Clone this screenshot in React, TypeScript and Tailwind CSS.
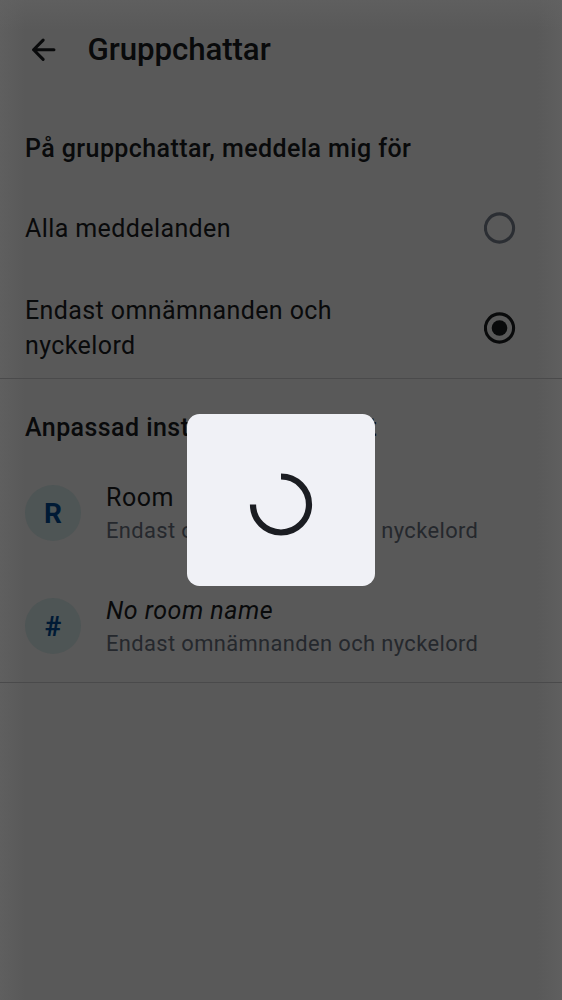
import React from 'react';

function SectionTitle({ children, className }: { children: React.ReactNode; className: string }) {
  return (
    <h2 className={`whitespace-nowrap pl-[25px] text-[25px] font-medium leading-[34px] text-[#090a0b] ${className}`}>
      {children}
    </h2>
  );
}

function Radio({ checked = false }: { checked?: boolean }) {
  const color = checked ? '#090a0b' : '#2b2e33';
  return (
    <svg width="32" height="32" viewBox="0 0 32 32" className="shrink-0" fill="none">
      <circle cx="15.5" cy="16" r="14.1" stroke={color} strokeWidth="3.1" />
      {checked && <circle cx="15.5" cy="16" r="7.8" fill={color} />}
    </svg>
  );
}

function Option({ label, checked }: { label: string; checked?: boolean }) {
  return (
    <div className="flex h-[100px] items-center justify-between pl-[25px] pr-[46px]">
      <span className={`w-[360px] text-[25px] leading-[34.4px] tracking-[0.4px] text-[#090a0b] ${checked ? 'pt-[1px]' : 'pt-[2px]'}`}>
        {label}
      </span>
      <Radio checked={checked} />
    </div>
  );
}

function Room({ initial, name, italic }: { initial: string; name: string; italic?: boolean }) {
  return (
    <div className="flex h-[112.5px] items-center pl-[25px]">
      <div className="flex size-[56px] shrink-0 items-center justify-center rounded-full bg-[#4e5555] pt-[2px] text-[28px] font-bold text-[#001a35]">
        {initial}
      </div>
      <div className="ml-[25px] whitespace-nowrap pt-[2px]">
        <div className={`text-[25px] leading-[34px] tracking-[0.5px] text-[#090a0b] ${italic ? 'italic' : ''}`}>{name}</div>
        <div className="text-[21.9px] leading-[32px] tracking-[0.38px] text-[#25282d]">Endast omnämnanden och nyckelord</div>
      </div>
    </div>
  );
}

export default function App() {
  return (
    <div className="relative h-[1000px] w-[562px] overflow-hidden bg-[#595959] bg-[linear-gradient(to_bottom,#63636399,#63636300_30px),linear-gradient(to_right,#5f5f5f,#5f5f5f00_25px,#5f5f5f00_537px,#5f5f5f)] font-['Roboto',sans-serif]">
      <header className="flex h-[100px] items-center pl-[25px]">
        <svg width="37.5" height="37.5" viewBox="0 0 24 24" className="shrink-0" fill="none" stroke="#090a0b" strokeWidth="2" strokeLinecap="round" strokeLinejoin="round">
          <path d="M18.5 12H5.5M11.6 5.9 5.5 12l6.1 6.1" />
        </svg>
        <h1 className="ml-[25px] pt-[1px] text-[31.25px] font-medium tracking-[-0.08px] text-[#090a0b]">Gruppchattar</h1>
      </header>
      <SectionTitle className="mt-[32px] tracking-[0.41px]">På gruppchattar, meddela mig för</SectionTitle>
      <div className="mt-[12px]">
        <Option label="Alla meddelanden" />
        <Option label="Endast omnämnanden och nyckelord" checked />
      </div>
      <div className="h-px bg-[#4a4a4b]" />
      <SectionTitle className="mt-[32px] tracking-[0.43px]">Anpassad inställning per chatt</SectionTitle>
      <div className="mt-[12px]">
        <Room initial="R" name="Room" />
        <Room initial="#" name="No room name" italic />
      </div>
      <div className="h-px bg-[#4a4a4b]" />
      <div className="absolute left-[187px] top-[414px] flex h-[172px] w-[188px] items-center justify-center rounded-[12.5px] bg-[#f0f1f6]">
        <svg width="64" height="64" viewBox="0 0 64 64" fill="none" className="overflow-visible">
          <path d="M32 8.5A28 28 0 1 1 4 36.5" stroke="#1b1d22" strokeWidth="6.2" />
        </svg>
      </div>
    </div>
  );
}
